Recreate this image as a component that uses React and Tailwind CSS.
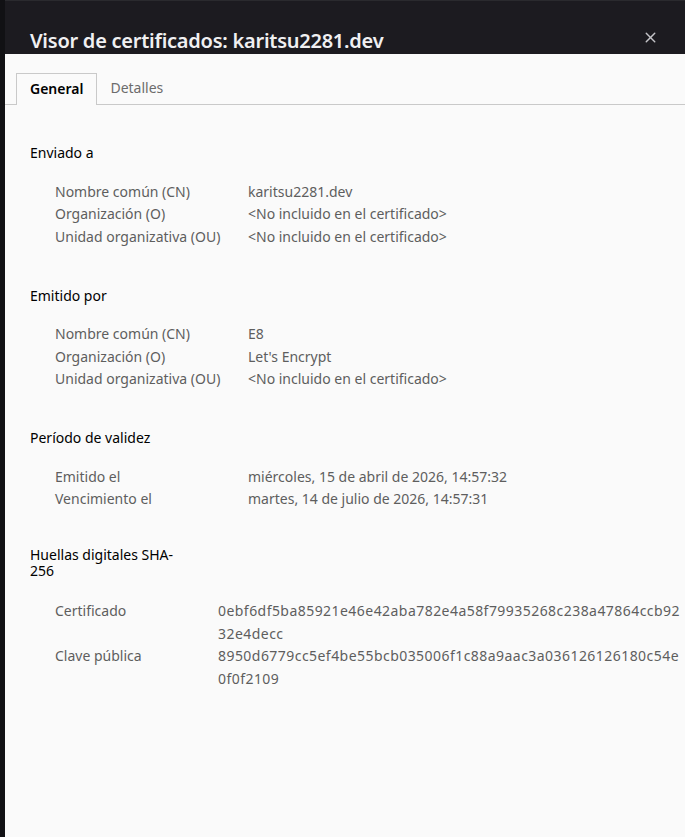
import { X } from "lucide-react";

const font = { fontFamily: '"Noto Sans", "Open Sans", sans-serif' };

const sections = [
  {
    title: "Enviado a",
    rows: [
      ["Nombre común (CN)", "karitsu2281.dev"],
      ["Organización (O)", "<No incluido en el certificado>"],
      ["Unidad organizativa (OU)", "<No incluido en el certificado>"],
    ],
  },
  {
    title: "Emitido por",
    rows: [
      ["Nombre común (CN)", "E8"],
      ["Organización (O)", "Let's Encrypt"],
      ["Unidad organizativa (OU)", "<No incluido en el certificado>"],
    ],
  },
  {
    title: "Período de validez",
    rows: [
      ["Emitido el", "miércoles, 15 de abril de 2026, 14:57:32"],
      ["Vencimiento el", "martes, 14 de julio de 2026, 14:57:31"],
    ],
  },
];

const hashes = [
  ["Certificado", "0ebf6df5ba85921e46e42aba782e4a58f79935268c238a47864ccb9232e4decc"],
  ["Clave pública", "8950d6779cc5ef4be55bcb035006f1c88a9aac3a036126126180c54e0f0f2109"],
];

export default function App() {
  return (
    <div className="w-[685px] h-[837px] bg-[#0f0f12] flex overflow-hidden" style={font}>
      <div className="w-[5px] shrink-0 bg-[#111114]" />
      <div className="flex-1 flex flex-col">
        <div className="h-[54px] bg-[#1c1b20] border-t border-[#2a2a2e] flex items-end justify-between pl-[25px] pr-[31px]">
          <h1 className="text-[20px] font-semibold text-[#f0f0f2] leading-[28px] tracking-[-0.25px] mb-[-1px]">
            Visor de certificados: karitsu2281.dev
          </h1>
          <X className="w-[17px] h-[17px] mb-[8px] text-[#c4c4c8]" strokeWidth={2} />
        </div>
        <div className="flex-1 bg-[#fafafa] text-[14px] leading-[22.5px]">
          <div className="pt-[19px] flex border-b border-[#c9c9c9] pl-[11px]">
            <div className="h-[32px] -mb-px px-[13px] flex items-center border border-b-0 border-[#c9c9c9] bg-[#fafafa] font-semibold text-black">
              General
            </div>
            <div className="h-[31px] px-[13px] flex items-center text-[#6c6c6c]">Detalles</div>
          </div>
          <div className="pl-[25px] pr-[10px] pt-[37px]">
            {sections.map((s) => (
              <div key={s.title} className="mb-[36.5px]">
                <div className="text-black">{s.title}</div>
                <div className="mt-[16px] pl-[25px] text-[#5e5e5e]">
                  {s.rows.map(([k, v]) => (
                    <div key={k} className="flex">
                      <div className="w-[193px] shrink-0">{k}</div>
                      <div>{v}</div>
                    </div>
                  ))}
                </div>
              </div>
            ))}
            <div>
              <div className="text-black w-[160px] leading-[16px]">Huellas digitales SHA-256</div>
              <div className="mt-[21px] pl-[25px] text-[#5e5e5e]">
                {hashes.map(([k, v]) => (
                  <div key={k} className="flex">
                    <div className="w-[163px] shrink-0">{k}</div>
                    <div className="tracking-[0.45px]">
                      <div>{v.slice(0, 56)}</div>
                      <div>{v.slice(56)}</div>
                    </div>
                  </div>
                ))}
              </div>
            </div>
          </div>
        </div>
      </div>
    </div>
  );
}
